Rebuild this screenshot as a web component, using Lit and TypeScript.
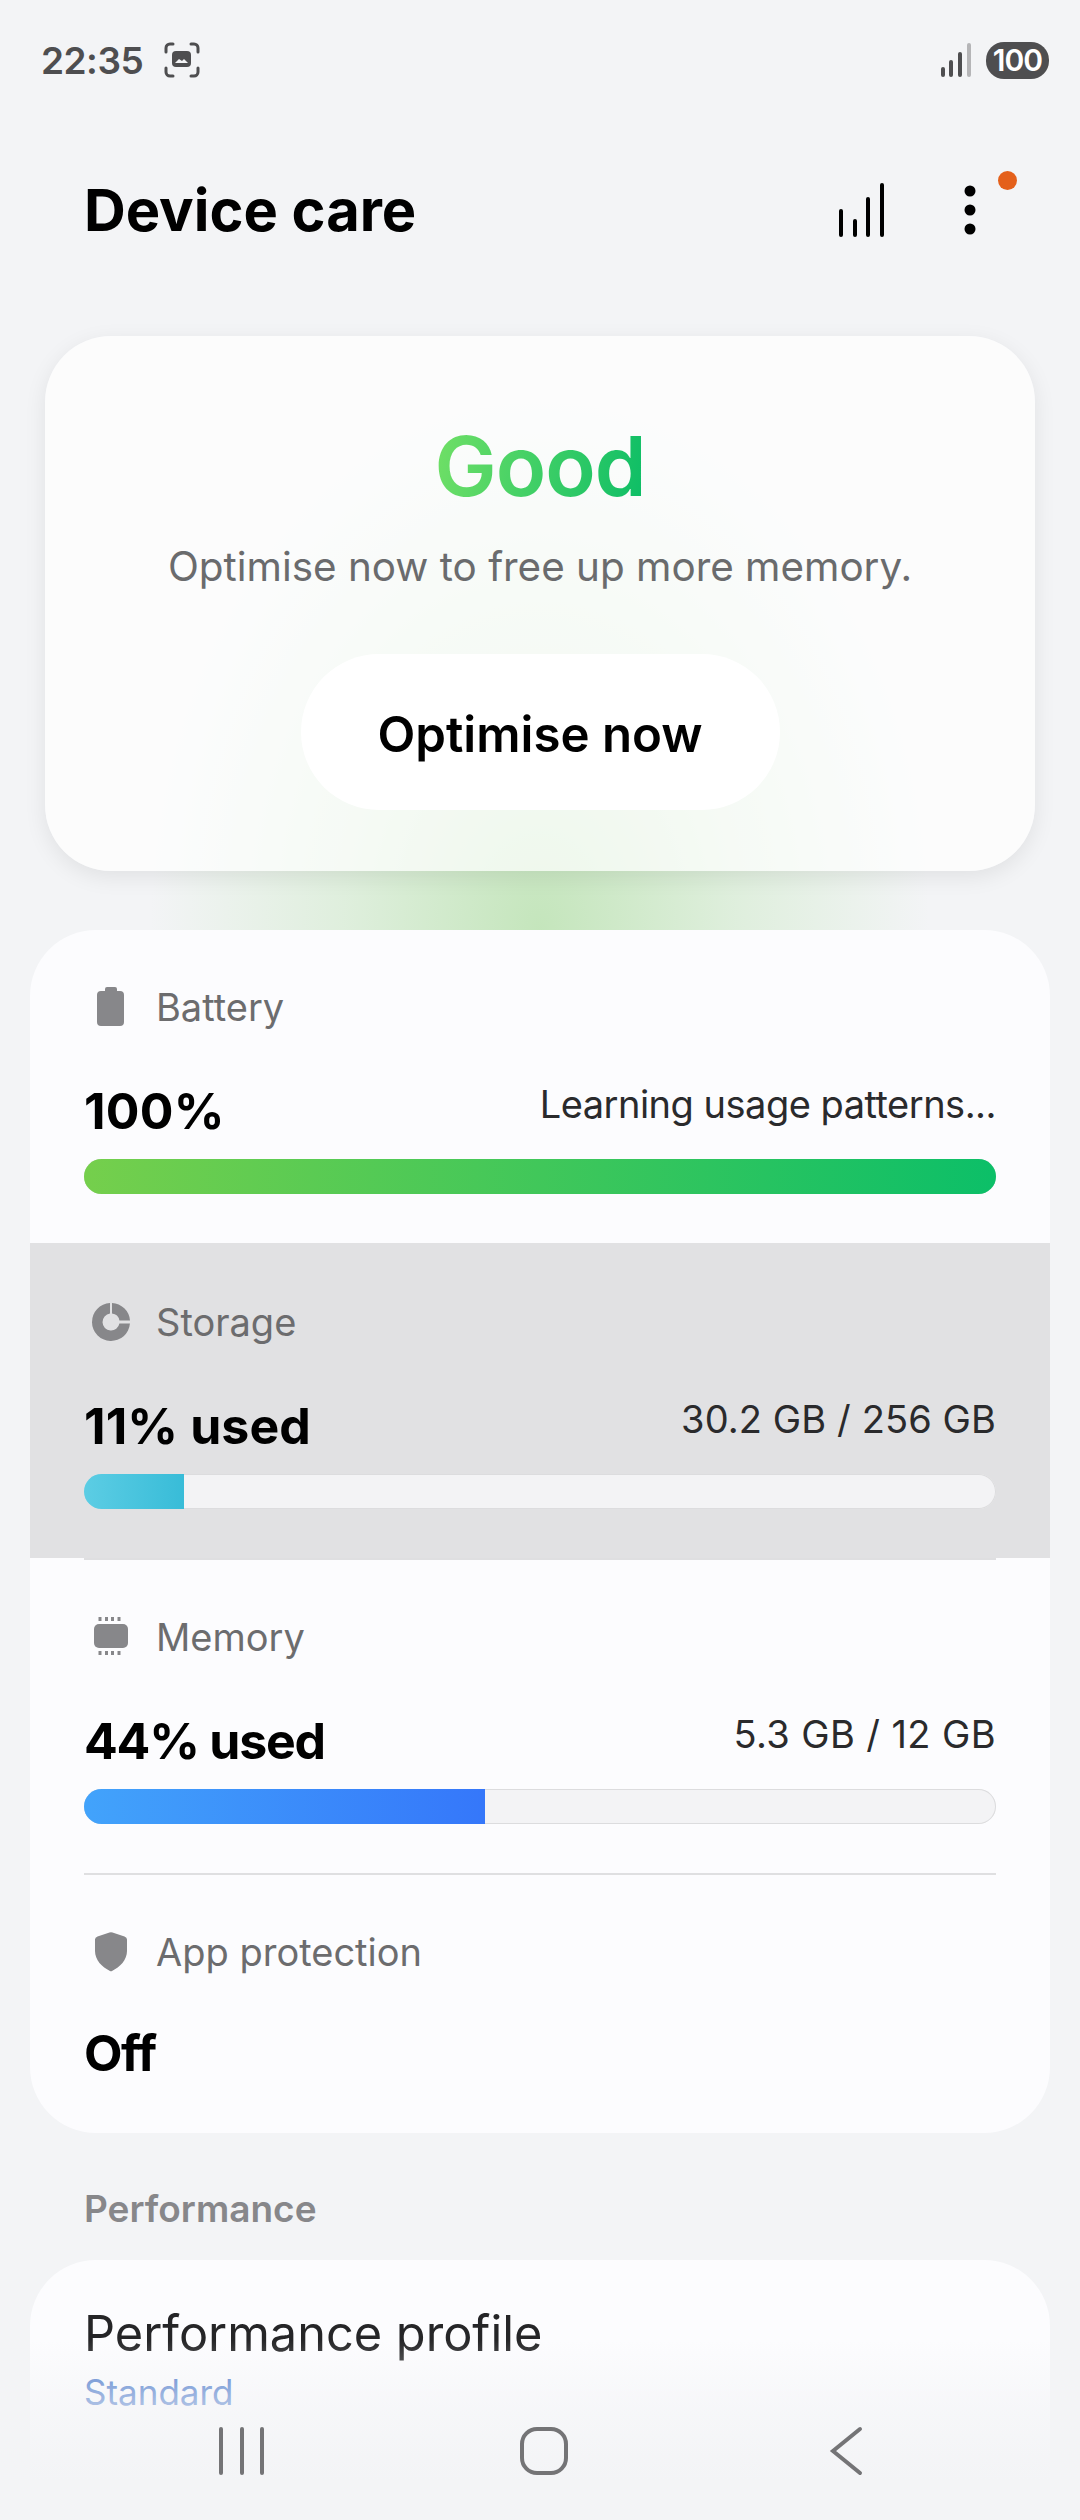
import { LitElement, html, css, svg } from 'lit';
import { customElement } from 'lit/decorators.js';

interface Row {
  label: string;
  icon: unknown;
  value: string;
  valueTrack: number;
  detail?: string;
  detailTrack?: number;
  pct?: number;
  fill?: string;
  pressed?: boolean;
}

const batteryIcon = svg`<path d="M14 2a2 2 0 0 1 2-2h8a2 2 0 0 1 2 2v2h3a4 4 0 0 1 4 4v27a4 4 0 0 1-4 4H10a4 4 0 0 1-4-4V8a4 4 0 0 1 4-4h4z" fill="#87878a"/>`;
const storageIcon = svg`<path d="M19 1A19 19 0 1 0 38.940 21.500H28.400A8.500 8.500 0 1 1 19 11.600z" fill="#87878a"/><path d="M21 1A19 19 0 0 1 39 18.500H28.400A8.500 8.500 0 0 0 21 11.600z" fill="#87878a"/>`;
const memoryIcon = svg`<rect x="3" y="7" width="34" height="24" rx="5" fill="#87878a"/>
  ${[7.5, 14, 20, 26.5].map(x => svg`<rect x="${x}" y="0" width="3" height="4" fill="#87878a"/><rect x="${x}" y="34" width="3" height="4" fill="#87878a"/>`)}`;
const shieldIcon = svg`<path d="M18.500.5q1.500-.5 3 0L33.500 4.500q2.500.8 2.500 3V19c0 9-7 16-15 20q-1 .4-2 0C11 35 4 28 4 19V7.500q0-2.200 2.500-3z" fill="#87878a"/>`;

const ROWS: Row[] = [
  { label: 'Battery', icon: batteryIcon, value: '100%', valueTrack: 0.25, detail: 'Learning usage patterns...', detailTrack: -0.5, pct: 100, fill: 'linear-gradient(90deg, #75cf4c, #0cbf68)' },
  { label: 'Storage', icon: storageIcon, value: '11% used', valueTrack: 0.1, detail: '30.2 GB / 256 GB', detailTrack: 0.1, pct: 11, fill: 'linear-gradient(90deg, #5ccde4, #38bcd8)', pressed: true },
  { label: 'Memory', icon: memoryIcon, value: '44% used', valueTrack: -1.25, detail: '5.3 GB / 12 GB', detailTrack: 0.4, pct: 44, fill: 'linear-gradient(90deg, #42a3fb, #3577fa)' },
  { label: 'App protection', icon: shieldIcon, value: 'Off', valueTrack: -1.5 },
];

@customElement('app-root')
export class AppRoot extends LitElement {
  static styles = css`
    :host {
      display: block;
      position: relative;
      height: 2520px;
      overflow: hidden;
      background: #f3f4f6;
      font-family: Inter, 'Liberation Sans', sans-serif;
      color: #000;
    }

    .glow {
      position: absolute;
      left: 150px;
      top: 400px;
      width: 780px;
      height: 530px;
      background: radial-gradient(ellipse 50% 100% at 50% 100%, rgba(150, 215, 130, 0.5), rgba(170, 225, 155, 0.28) 50%, rgba(200, 235, 190, 0) 100%);
    }

    .status {
      position: relative;
      display: flex;
      align-items: center;
      height: 120px;
      padding: 0 31px 0 41px;
      box-sizing: border-box;
      color: #4e4e50;
    }

    .time {
      font-size: 37px;
      font-weight: 600;
      letter-spacing: -0.5px;
    }

    .shot {
      margin-left: 21px;
      width: 36px;
      height: 36px;
    }

    .signal {
      margin-left: auto;
      width: 32px;
      height: 34px;
    }

    .pill {
      margin-left: 14px;
      width: 63px;
      height: 37px;
      border-radius: 18px;
      background: #4e4e50;
      color: #fff;
      font-size: 30px;
      font-weight: 600;
      letter-spacing: -1px;
      text-align: center;
      line-height: 37px;
    }

    .head {
      position: relative;
      display: flex;
      align-items: center;
      height: 96px;
      margin-top: 42px;
      padding-left: 84px;
    }

    h1 {
      margin: 0;
      font-size: 57.800px;
      font-weight: 700;
    }

    .bars {
      margin-left: auto;
      width: 46px;
      height: 54px;
    }

    .more {
      position: relative;
      margin: 0 104px 0 79px;
      width: 12px;
      height: 50px;
    }

    .more svg {
      display: block;
      width: 12px;
      height: 50px;
    }

    .dot {
      position: absolute;
      left: 34px;
      top: -14px;
      width: 19px;
      height: 19px;
      border-radius: 50%;
      background: #e4601b;
    }

    .hero {
      position: relative;
      margin: 78px 45px 0;
      height: 535px;
      box-sizing: border-box;
      padding-top: 84px;
      border-radius: 66px;
      background: rgba(255, 255, 255, 0.7);
      box-shadow: 0 6px 22px rgba(0, 0, 0, 0.08);
      display: flex;
      flex-direction: column;
      align-items: center;
    }

    .good {
      font-size: 83px;
      font-weight: 600;
      line-height: 92px;
      letter-spacing: -1px;
      background: linear-gradient(100deg, #72e066, #0bbd66);
      -webkit-background-clip: text;
      background-clip: text;
      color: transparent;
    }

    .msg {
      margin-top: 30px;
      font-size: 40.400px;
      line-height: 50px;
      color: #6a6b6d;
    }

    .btn {
      margin-top: 62px;
      width: 479px;
      height: 156px;
      box-sizing: border-box;
      padding-top: 4px;
      border-radius: 78px;
      background: #fff;
      font-size: 49.200px;
      font-weight: 600;
      display: flex;
      align-items: center;
      justify-content: center;
    }

    .list {
      position: relative;
      margin: 59px 30px 0;
      height: 1203px;
      border-radius: 66px;
      background: #fcfcfe;
      overflow: hidden;
    }

    .row {
      position: relative;
      height: 315px;
      box-sizing: border-box;
      padding: 2px 54px 0;
    }

    .row.pressed {
      background: #e1e1e3;
    }

    .row.first {
      height: 313px;
      padding-top: 0;
    }

    .row .sep {
      position: absolute;
      left: 54px;
      right: 54px;
      bottom: -2px;
      height: 2px;
      background: #dfdfe1;
      z-index: 1;
    }

    .label {
      display: flex;
      align-items: center;
      gap: 25px;
      height: 50px;
      padding-top: 52px;
      font-size: 38px;
      color: #6c6c6e;
    }

    .label svg {
      width: 40px;
      height: 40px;
      margin-left: 7px;
      flex: none;
    }

    .vals {
      display: flex;
      justify-content: space-between;
      align-items: flex-start;
      margin-top: 46px;
      height: 66px;
    }

    .row.plain .vals {
      margin-top: 43px;
    }

    .value {
      font-size: 50px;
      font-weight: 700;
      line-height: 66px;
    }

    .detail {
      margin-top: 1px;
      font-size: 38px;
      line-height: 50px;
      color: #2a2a2c;
    }

    .track {
      margin-top: 15px;
      height: 35px;
      border-radius: 18px;
      background: #f3f3f5;
      box-shadow: inset 0 0 0 1px #dcdcde;
      overflow: hidden;
    }

    .fill {
      height: 100%;
    }

    .section {
      position: relative;
      margin: 54px 0 0 84px;
      height: 44px;
      font-size: 37px;
      line-height: 44px;
      font-weight: 600;
      color: #87878a;
    }

    .perf {
      position: relative;
      margin: 29px 30px 0;
      height: 400px;
      box-sizing: border-box;
      padding: 44px 54px 0;
      border-radius: 66px 66px 0 0;
      background: #fcfcfe;
    }

    .perf-title {
      font-size: 48.700px;
      line-height: 60px;
      color: #252527;
    }

    .perf-sub {
      margin-top: 6px;
      font-size: 35px;
      line-height: 44px;
      color: #3e70c8;
    }

    .fade {
      position: absolute;
      left: 0;
      right: 0;
      top: 2340px;
      bottom: 0;
      background: linear-gradient(180deg, rgba(243, 244, 246, 0), rgba(243, 244, 246, 0.6) 36%, #f3f4f6 78%);
    }

    .nav {
      position: absolute;
      left: 0;
      top: 2420px;
      width: 1080px;
      height: 64px;
    }
  `;

  private renderRow(r: Row, i: number) {
    const sep = i === 1 || i === 2;
    return html`
      <div class="row ${i === 0 ? 'first' : ''} ${r.pressed ? 'pressed' : ''} ${r.pct === undefined ? 'plain' : ''}">
        <div class="label">
          <svg viewBox="0 0 40 40">${r.icon}</svg>
          <span>${r.label}</span>
        </div>
        <div class="vals">
          <span class="value" style="letter-spacing:${r.valueTrack}px">${r.value}</span>
          ${r.detail ? html`<span class="detail" style="letter-spacing:${r.detailTrack}px">${r.detail}</span>` : ''}
        </div>
        ${r.pct !== undefined ? html`
          <div class="track">
            <div class="fill" style="width:${r.pct}%;background:${r.fill}"></div>
          </div>` : ''}
        ${sep ? html`<div class="sep"></div>` : ''}
      </div>
    `;
  }

  render() {
    return html`
      <div class="glow"></div>
      <div class="status">
        <span class="time">22:35</span>
        <svg class="shot" viewBox="0 0 36 36" fill="none" stroke="#4e4e50" stroke-width="3" stroke-linecap="round">
          <path d="M2 10V6a4 4 0 0 1 4-4h3M27 2h3a4 4 0 0 1 4 4v4M34 26v4a4 4 0 0 1-4 4h-3M9 34H6a4 4 0 0 1-4-4v-4"/>
          <rect x="8" y="9" width="19" height="16" rx="4" fill="#4e4e50" stroke="none"/>
          <path d="M11 21l4-4 3 2 2-2 4 4z" fill="#f3f4f6" stroke="none"/>
        </svg>
        <svg class="signal" viewBox="0 0 32 34">
          <rect x="1" y="24" width="4" height="10" rx="2" fill="#4e4e50"/>
          <rect x="9" y="17" width="4" height="17" rx="2" fill="#4e4e50"/>
          <rect x="18" y="9" width="4" height="25" rx="2" fill="#4e4e50"/>
          <rect x="27" y="0" width="4" height="34" rx="2" fill="#b5b5b7"/>
        </svg>
        <span class="pill">100</span>
      </div>
      <div class="head">
        <h1>Device care</h1>
        <svg class="bars" viewBox="0 0 46 54" fill="#000">
          <rect x="0" y="26" width="4" height="28" rx="2"/>
          <rect x="14" y="36" width="4" height="18" rx="2"/>
          <rect x="27" y="14" width="4" height="40" rx="2"/>
          <rect x="41" y="0" width="4" height="54" rx="2"/>
        </svg>
        <div class="more">
          <svg viewBox="0 0 12 50" fill="#000">
            <circle cx="6" cy="6" r="5.500"/>
            <circle cx="6" cy="25" r="5.500"/>
            <circle cx="6" cy="44" r="5.500"/>
          </svg>
          <span class="dot"></span>
        </div>
      </div>
      <div class="hero">
        <div class="good">Good</div>
        <div class="msg">Optimise now to free up more memory.</div>
        <div class="btn">Optimise now</div>
      </div>
      <div class="list">
        ${ROWS.map((r, i) => this.renderRow(r, i))}
      </div>
      <div class="section">Performance</div>
      <div class="perf">
        <div class="perf-title">Performance profile</div>
        <div class="perf-sub">Standard</div>
      </div>
      <div class="fade"></div>
      <svg class="nav" viewBox="0 0 1080 64" fill="none" stroke="#747476" stroke-width="4" stroke-linecap="round" stroke-linejoin="round">
        <path d="M221 9v44M242 9v44M262 9v44"/>
        <rect x="522" y="9" width="44" height="44" rx="15"/>
        <path d="M860 9l-27 22 27 22" stroke-linejoin="miter"/>
      </svg>
    `;
  }
}
